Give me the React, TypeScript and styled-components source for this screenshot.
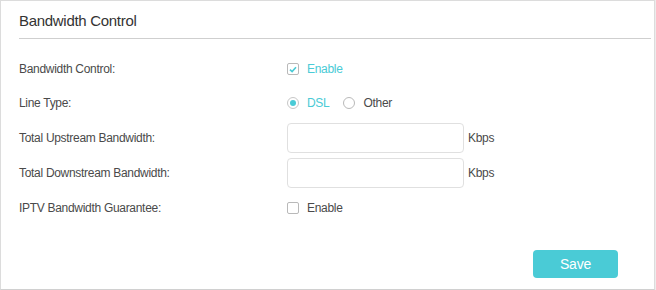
import styled, { createGlobalStyle } from "styled-components";

const GlobalStyle = createGlobalStyle`
  html, body { margin: 0; padding: 0; background: #fff; }
  body { font-family: "Liberation Sans", Arial, sans-serif; }
  * { box-sizing: border-box; }
`;

// ─── Styled Components ────────────────────────────────────────────────────────

const Panel = styled.div`
  width: 655px;
  height: 290px;
  border: 1px solid #dcdcdc;
  border-bottom-color: #d0d0d0;
  box-shadow: 1px 0 0 #ececec;
  background: #fff;
  display: flex;
  flex-direction: column;
  letter-spacing: -0.3px;
`;

const Header = styled.div`
  margin: 0 3px 0 18px;
  height: 38px;
  border-bottom: 1px solid #cfcfcf;
  display: flex;
  align-items: center;
  padding-top: 2px;
`;

const Title = styled.h2`
  margin: 0;
  font-size: 15px;
  font-weight: 400;
  color: #333;
`;

const Form = styled.div`
  padding: 16px 0 0 18px;
  display: flex;
  flex-direction: column;
  gap: 5px;
`;

const Row = styled.div<{ $h?: number }>`
  height: ${(p) => p.$h ?? 30}px;
  display: flex;
  align-items: center;
`;

const Label = styled.div`
  width: 268px;
  font-size: 12px;
  color: #4a4a4a;
`;

const Field = styled.div`
  display: flex;
  align-items: center;
`;

const Option = styled.label<{ $active?: boolean }>`
  display: flex;
  align-items: center;
  gap: 8px;
  margin-right: 14px;
  font-size: 12px;
  color: ${(p) => (p.$active ? "#4acbd6" : "#4a4a4a")};
  cursor: pointer;
`;

const Box = styled.span`
  width: 12px;
  height: 12px;
  border: 1px solid #b9b9b9;
  border-radius: 2px;
  display: flex;
  align-items: center;
  justify-content: center;
  background: #fff;
`;

const Radio = styled.span<{ $on?: boolean }>`
  width: 12px;
  height: 12px;
  border: 1px solid ${(p) => (p.$on ? "#c7c7c7" : "#b9b9b9")};
  border-radius: 50%;
  display: flex;
  align-items: center;
  justify-content: center;

  &::after {
    content: "";
    width: 6px;
    height: 6px;
    border-radius: 50%;
    background: ${(p) => (p.$on ? "#4acbd6" : "transparent")};
  }
`;

const Input = styled.input`
  width: 177px;
  height: 30px;
  border: 1px solid #e0e0e0;
  border-radius: 4px;
  outline: none;
  padding: 0 8px;
  font-family: inherit;
  font-size: 12px;
`;

const Unit = styled.span`
  margin-left: 4px;
  font-size: 12px;
  color: #4a4a4a;
`;

const Footer = styled.div`
  display: flex;
  justify-content: flex-end;
  padding: 27px 36px 0 0;
`;

const SaveButton = styled.button`
  width: 85px;
  height: 28px;
  border: none;
  border-radius: 4px;
  background: #4acbd6;
  color: #fff;
  font-family: inherit;
  font-size: 14px;
  letter-spacing: -0.2px;
  cursor: pointer;
`;

// ─── Component ────────────────────────────────────────────────────────────────

const Check = () => (
  <svg width="8" height="7" viewBox="0 0 8 7">
    <path d="M1 3.6 L3.1 5.6 L7 1.2" fill="none" stroke="#4acbd6" strokeWidth="1.6" />
  </svg>
);

export default function App() {
  return (
    <>
      <GlobalStyle />
      <Panel>
        <Header>
          <Title>Bandwidth Control</Title>
        </Header>

        <Form>
          <Row $h={28}>
            <Label>Bandwidth Control:</Label>
            <Field>
              <Option $active>
                <Box>
                  <Check />
                </Box>
                Enable
              </Option>
            </Field>
          </Row>

          <Row>
            <Label>Line Type:</Label>
            <Field>
              <Option $active>
                <Radio $on />
                DSL
              </Option>
              <Option>
                <Radio />
                Other
              </Option>
            </Field>
          </Row>

          <Row>
            <Label>Total Upstream Bandwidth:</Label>
            <Field>
              <Input />
              <Unit>Kbps</Unit>
            </Field>
          </Row>

          <Row>
            <Label>Total Downstream Bandwidth:</Label>
            <Field>
              <Input />
              <Unit>Kbps</Unit>
            </Field>
          </Row>

          <Row>
            <Label>IPTV Bandwidth Guarantee:</Label>
            <Field>
              <Option>
                <Box />
                Enable
              </Option>
            </Field>
          </Row>
        </Form>

        <Footer>
          <SaveButton>Save</SaveButton>
        </Footer>
      </Panel>
    </>
  );
}
